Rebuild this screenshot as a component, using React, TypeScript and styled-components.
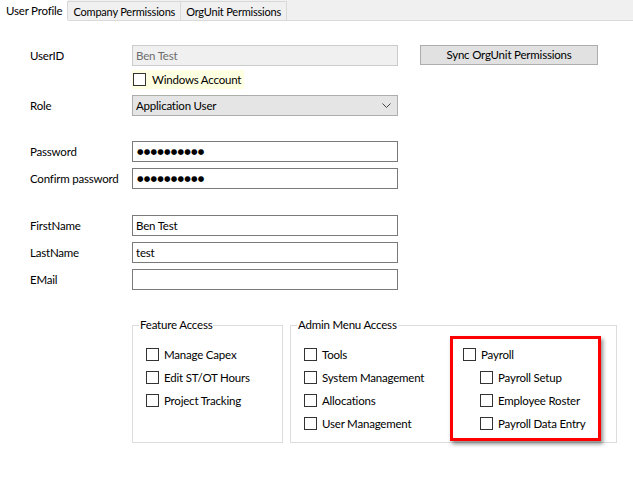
import styled, { createGlobalStyle } from "styled-components";

const Global = createGlobalStyle`
  html, body { margin: 0; padding: 0; background: #fff; }
  body {
    font-family: Lato, "Segoe UI", sans-serif;
    font-size: 11.5px;
    letter-spacing: -0.2px;
    color: #000;
  }
`;

const Window = styled.div`
  width: 633px;
  height: 482px;
  background: #fff;
  overflow: hidden;
`;

const TabStrip = styled.div`
  height: 20px;
  background: #f0f0f0;
  border-bottom: 1px solid #d9d9d9;
  display: flex;
  align-items: flex-end;
`;

const Tab = styled.div<{ $active?: boolean }>`
  height: ${(p) => (p.$active ? "21px" : "18px")};
  margin-bottom: ${(p) => (p.$active ? "-1px" : "0")};
  padding: 0 ${(p) => (p.$active ? "6px" : "5px")};
  background: ${(p) => (p.$active ? "#fff" : "#f0f0f0")};
  border: ${(p) => (p.$active ? "none" : "1px solid #d9d9d9")};
  border-bottom: none;
  margin-left: ${(p) => (p.$active ? "0" : "-1px")};
  display: flex;
  align-items: center;
  white-space: nowrap;
  font-size: ${(p) => (p.$active ? "11.5px" : "11px")};
`;

const Body = styled.div`
  padding: 24px 0 0 30px;
`;

const Form = styled.div`
  display: grid;
  grid-template-columns: 102px 266px auto;
  align-items: center;
`;

const Label = styled.div<{ $gap?: number }>`
  height: 21px;
  display: flex;
  align-items: center;
  margin-top: ${(p) => p.$gap ?? 0}px;
  white-space: nowrap;
`;

const Field = styled.div<{ $gap?: number; $disabled?: boolean; $select?: boolean }>`
  height: 21px;
  box-sizing: border-box;
  margin-top: ${(p) => p.$gap ?? 0}px;
  border: 1px solid ${(p) => (p.$disabled ? "#cccccc" : p.$select ? "#adadad" : "#7a7a7a")};
  background: ${(p) => (p.$disabled ? "#f0f0f0" : p.$select ? "#e5e5e5" : "#fff")};
  color: ${(p) => (p.$disabled ? "#6d6d6d" : "#000")};
  display: flex;
  align-items: center;
  justify-content: space-between;
  padding: 0 6px 0 3px;
`;

const Dots = styled.span`
  font-family: "DejaVu Sans", sans-serif;
  font-size: 7.5px;
  letter-spacing: 0.2px;
  padding-left: 1px;
`;

const SyncButton = styled.div`
  margin-left: 22px;
  width: 178px;
  height: 20px;
  box-sizing: border-box;
  margin-top: -2px;
  background: #e1e1e1;
  border: 1px solid #adadad;
  display: flex;
  align-items: center;
  justify-content: center;
`;

const Empty = styled.div``;

const Hint = styled.div`
  grid-column: 2;
  margin-top: 4px;
  height: 19px;
  width: 111px;
  background: #ffffe1;
  display: flex;
  align-items: center;
  gap: 6px;
  padding-left: 1px;
  white-space: nowrap;
`;

const Box = styled.span`
  width: 13px;
  height: 13px;
  box-sizing: border-box;
  border: 1px solid #333;
  background: #fff;
  flex: none;
`;

const Check = styled.div<{ $indent?: number }>`
  height: 23px;
  display: flex;
  align-items: center;
  gap: 5px;
  padding-left: ${(p) => p.$indent ?? 0}px;
  white-space: nowrap;
`;

const Groups = styled.div`
  display: flex;
  gap: 7px;
  margin: 28px 0 0 102px;
`;

const Group = styled.fieldset<{ $w: number }>`
  width: ${(p) => p.$w}px;
  height: 125px;
  box-sizing: border-box;
  margin: 0;
  border: 1px solid #dcdcdc;
  padding: 11px 0 0 13px;
  display: flex;
  align-items: flex-start;
  legend {
    padding: 0 1px;
    margin-left: -7px;
    line-height: 14px;
  }
`;

const Column = styled.div<{ $w?: number }>`
  display: flex;
  flex-direction: column;
  width: ${(p) => (p.$w ? `${p.$w}px` : "auto")};
`;

const Callout = styled.div`
  margin-top: -7px;
  width: 151px;
  height: 105px;
  box-sizing: border-box;
  border: 3px solid #ff0000;
  box-shadow: 2px 3px 4px rgba(0, 0, 0, 0.45);
  padding: 4px 0 0 10px;
  display: flex;
  flex-direction: column;
`;

const Chevron = () => (
  <svg width="9" height="6" viewBox="0 0 9 6">
    <path d="M0.5 0.5 L4.5 4.5 L8.5 0.5" fill="none" stroke="#444" strokeWidth="1" />
  </svg>
);

const CheckItem = ({ label, indent }: { label: string; indent?: number }) => (
  <Check $indent={indent}>
    <Box />
    {label}
  </Check>
);

export default function App() {
  const dots = "●●●●●●●●●●";
  return (
    <>
      <Global />
      <Window>
        <TabStrip>
          <Tab $active>User Profile</Tab>
          <Tab>Company Permissions</Tab>
          <Tab>OrgUnit Permissions</Tab>
        </TabStrip>
        <Body>
          <Form>
            <Label>UserID</Label>
            <Field $disabled>Ben Test</Field>
            <SyncButton>Sync OrgUnit Permissions</SyncButton>

            <Hint>
              <Box />
              Windows Account
            </Hint>
            <Empty />

            <Label $gap={6}>Role</Label>
            <Field $gap={6} $select>
              Application User
              <Chevron />
            </Field>
            <Empty />

            <Label $gap={25}>Password</Label>
            <Field $gap={25}>
              <Dots>{dots}</Dots>
            </Field>
            <Empty />

            <Label $gap={6}>Confirm password</Label>
            <Field $gap={6}>
              <Dots>{dots}</Dots>
            </Field>
            <Empty />

            <Label $gap={26}>FirstName</Label>
            <Field $gap={26}>Ben Test</Field>
            <Empty />

            <Label $gap={6}>LastName</Label>
            <Field $gap={6}>test</Field>
            <Empty />

            <Label $gap={6}>EMail</Label>
            <Field $gap={6} />
            <Empty />
          </Form>

          <Groups>
            <Group $w={151}>
              <legend>Feature Access</legend>
              <Column>
                <CheckItem label="Manage Capex" />
                <CheckItem label="Edit ST/OT Hours" />
                <CheckItem label="Project Tracking" />
              </Column>
            </Group>
            <Group $w={327}>
              <legend>Admin Menu Access</legend>
              <Column $w={146}>
                <CheckItem label="Tools" />
                <CheckItem label="System Management" />
                <CheckItem label="Allocations" />
                <CheckItem label="User Management" />
              </Column>
              <Callout>
                <CheckItem label="Payroll" />
                <CheckItem label="Payroll Setup" indent={17} />
                <CheckItem label="Employee Roster" indent={17} />
                <CheckItem label="Payroll Data Entry" indent={17} />
              </Callout>
            </Group>
          </Groups>
        </Body>
      </Window>
    </>
  );
}
